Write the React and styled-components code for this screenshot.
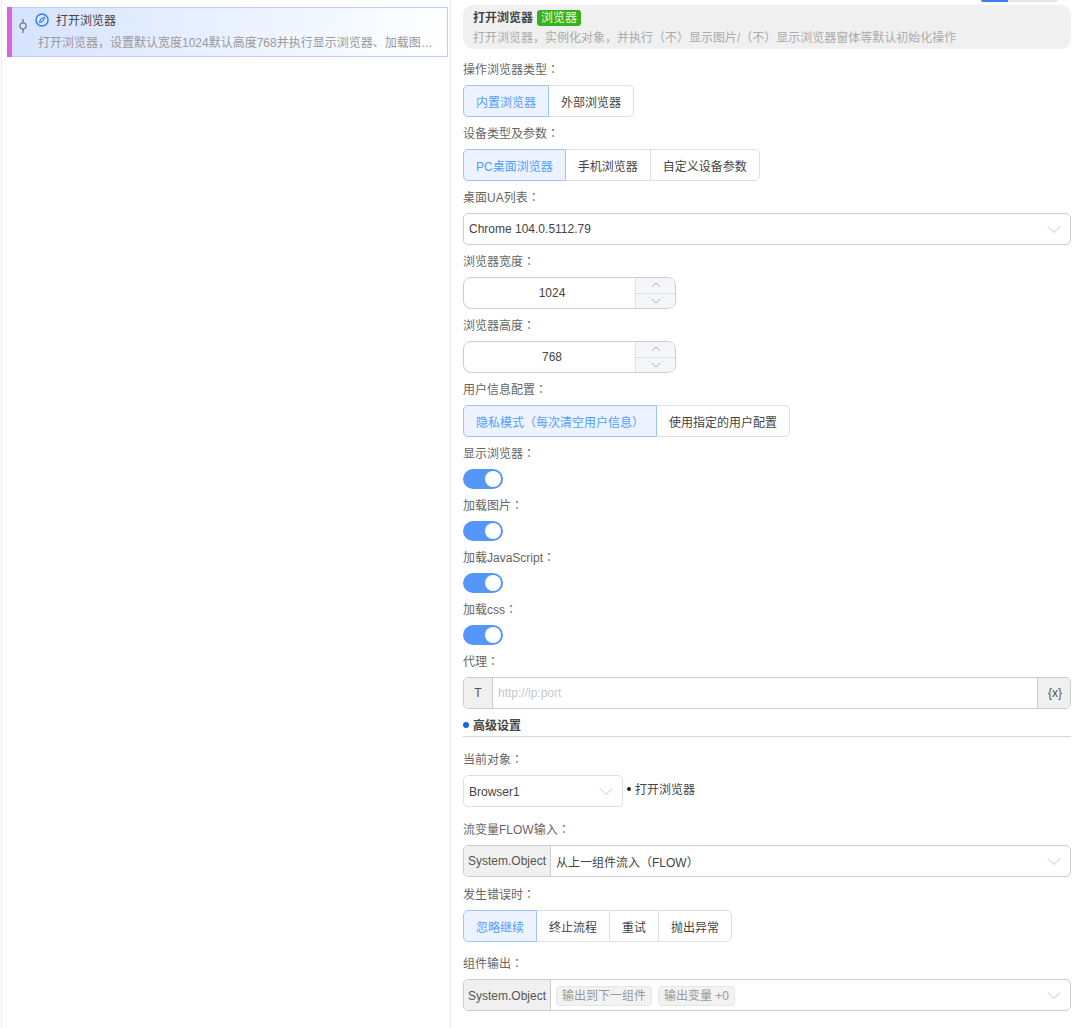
import React from 'react';
import styled, { createGlobalStyle } from 'styled-components';

const GlobalStyle = createGlobalStyle`
  html, body {
    margin: 0;
    padding: 0;
    background: #fff;
  }
  body {
    font-family: "Liberation Sans", "Noto Sans CJK SC", sans-serif;
    font-size: 12px;
    color: #333;
  }
  * {
    box-sizing: border-box;
  }
`;

const Page = styled.div`
  display: flex;
  height: 1028px;
  padding-left: 1px;
  overflow: hidden;
`;

const LeftPanel = styled.aside`
  width: 450px;
  flex: none;
  padding: 7px 2px 0 5px;
  border-left: 1px solid #f0f0f0;
  border-right: 1px solid #ececec;
`;

const FlowItem = styled.div`
  height: 50px;
  display: flex;
  border: 1px solid #b8cdf8;
  background: linear-gradient(100deg, #d5e3ff 0%, #ffffff 100%);
`;

const ItemBar = styled.div`
  width: 5px;
  flex: none;
  margin: -1px 0 -1px -1px;
  background: #d964e0;
`;

const NodeMark = styled.div`
  width: 23px;
  flex: none;
  padding: 10px 0 0 7px;
`;

const ItemBody = styled.div`
  flex: 1;
  min-width: 0;
  padding-top: 1px;
`;

const ItemTitle = styled.div`
  display: flex;
  align-items: center;
  gap: 7px;
  height: 20px;
  color: #444;

  svg {
    margin-top: 1px;
  }
`;

const ItemDesc = styled.div`
  margin: 6px 0 0 3px;
  line-height: 16px;
  color: #999;
  white-space: nowrap;
`;

const RightPanel = styled.main`
  width: 620px;
  flex: none;
  padding-left: 12px;
`;

const TabSliver = styled.div`
  width: 77px;
  height: 2px;
  margin: 0 0 3px 518px;
  border-radius: 0 0 3px 3px;
  background: linear-gradient(90deg, #3d7bf0 0 27px, #e4e7ef 27px);
`;

const InfoCard = styled.div`
  height: 44px;
  margin-bottom: 4px;
  padding: 4px 10px 0;
  border-radius: 10px;
  background: #f0f0f0;
  color: #aaa;
  line-height: 18px;
`;

const InfoTitle = styled.div`
  display: flex;
  align-items: center;
  gap: 4px;
  height: 17px;
  margin-bottom: 3px;
  font-weight: 700;
  color: #444;
`;

const Tag = styled.span`
  height: 16px;
  padding: 0 4px;
  border-radius: 3px;
  background: #38b01f;
  color: #e6ffd8;
  font-weight: 400;
  line-height: 16px;
`;

const LabelRow = styled.div`
  height: 32px;
  margin-top: ${p => p.$top || 0}px;
  line-height: 32px;
  color: #666;
`;

// the reference's full-width colon sits centred in its cell, as the TC face draws it
const LabelColon = styled.span`
  font-family: "Noto Sans CJK TC", sans-serif;
`;

const Label = ({ top, children }) => (
  <LabelRow $top={top}>
    {children}
    <LabelColon>：</LabelColon>
  </LabelRow>
);

const RadioGroup = styled.div`
  display: flex;
  height: 32px;
`;

const RadioButton = styled.div`
  display: flex;
  align-items: center;
  padding: 0 12px;
  margin-left: -1px;
  border: 1px solid ${p => (p.$active ? '#9cc6ff' : '#dcdfe6')};
  background: ${p => (p.$active ? '#ecf3ff' : '#fff')};
  color: ${p => (p.$active ? '#4f9eff' : '#444')};
  z-index: ${p => (p.$active ? 1 : 0)};

  &:first-child {
    margin-left: 0;
    border-radius: 5px 0 0 5px;
  }
  &:last-child {
    border-radius: 0 5px 5px 0;
  }
`;

const Field = styled.div`
  display: flex;
  align-items: center;
  width: ${p => p.$width || '608px'};
  height: 32px;
  border: 1px solid ${p => (p.$light ? '#dcdfe6' : '#ccc')};
  border-radius: 5px;
  overflow: hidden;
  color: #444;
`;

const FieldValue = styled.div`
  display: flex;
  align-items: center;
  gap: 6px;
  flex: 1;
  min-width: 0;
  padding-left: 5px;
  padding-top: ${p => p.$nudge || 0}px;
`;

const Chevron = styled.svg`
  width: 14px;
  height: 14px;
  flex: none;
  margin-right: 9px;
  color: #c0c4cc;
`;

const Addon = styled.div`
  display: flex;
  align-items: center;
  justify-content: center;
  flex: none;
  width: ${p => p.$width}px;
  height: 100%;
  padding-top: ${p => p.$nudge || 0}px;
  padding-left: ${p => (p.$end ? 2 : 0)}px;
  background: #f0f0f0;
  color: #555;
  border-right: ${p => (p.$end ? 'none' : '1px solid #ccc')};
  border-left: ${p => (p.$end ? '1px solid #ccc' : 'none')};
`;

const Placeholder = styled.span`
  color: #c3c7cf;
`;

const Stepper = styled.div`
  display: flex;
  width: 213px;
  height: 32px;
  border: 1px solid #ccc;
  border-radius: 8px;
  overflow: hidden;
  color: #444;
`;

const StepperValue = styled.div`
  flex: 1;
  padding-left: 5px;
  text-align: center;
  line-height: 30px;
`;

const StepperButtons = styled.div`
  display: flex;
  flex-direction: column;
  width: 40px;
  flex: none;
  border-left: 1px solid #dcdfe6;
  background: #f5f6fa;
`;

const StepperButton = styled.div`
  display: flex;
  align-items: center;
  justify-content: center;
  flex: 1;
  color: #aab0bc;

  & + & {
    border-top: 1px solid #dcdfe6;
  }
`;

const Switch = styled.div`
  position: relative;
  width: 40px;
  height: 20px;
  border-radius: 10px;
  background: #5596fb;

  &::after {
    content: '';
    position: absolute;
    top: 2px;
    right: 2px;
    width: 16px;
    height: 16px;
    border-radius: 50%;
    background: #fff;
  }
`;

const SectionTitle = styled.div`
  display: flex;
  align-items: center;
  gap: 4px;
  height: 28px;
  margin-bottom: 6px;
  padding-top: 4px;
  border-bottom: 1px solid #d4d4d4;
  font-weight: 700;
  color: #444;

  &::before {
    content: '';
    width: 6px;
    height: 6px;
    border-radius: 50%;
    background: #1463e6;
  }
`;

const InlineRow = styled.div`
  display: flex;
  align-items: center;
  gap: 4px;
`;

const BulletNote = styled.div`
  display: flex;
  align-items: center;
  gap: 4px;
  margin-top: -5px;
  color: #444;

  &::before {
    content: '';
    width: 4px;
    height: 4px;
    border-radius: 50%;
    background: #222;
  }
`;

const Chip = styled.span`
  height: 20px;
  padding: 0 5px;
  border: 1px solid #e6e6e6;
  border-radius: 4px;
  background: #f2f2f2;
  color: #999;
  line-height: 18px;
`;

const ChevronDown = () => (
  <Chevron viewBox="0 0 14 14" fill="none" stroke="currentColor" strokeWidth="1">
    <path d="M1 4.5 7 10.5 13 4.5" />
  </Chevron>
);

const SmallArrow = ({ up }) => (
  <svg width="10" height="6" viewBox="0 0 10 6" fill="none" stroke="currentColor" strokeWidth="1">
    <path d={up ? 'M1 5 5 1 9 5' : 'M1 1 5 5 9 1'} />
  </svg>
);

const CompassIcon = () => (
  <svg width="14" height="14" viewBox="0 0 15 15" fill="none">
    <circle cx="7.5" cy="7.5" r="6.500" stroke="#2f7cf0" strokeWidth="1.500" />
    <path d="M10.600 4.400 8.800 8.800 4.400 10.600 6.200 6.200Z" stroke="#2f7cf0" strokeWidth="1" fill="#a9c8fa" />
  </svg>
);

const NodeIcon = () => (
  <svg width="8" height="16" viewBox="0 0 8 16" fill="none" stroke="#555" strokeWidth="1">
    <path d="M4 1V4.800M4 11.200V15" />
    <circle cx="4" cy="8" r="3.200" />
  </svg>
);

const NumberField = ({ value }) => (
  <Stepper>
    <StepperValue>{value}</StepperValue>
    <StepperButtons>
      <StepperButton>
        <SmallArrow up />
      </StepperButton>
      <StepperButton>
        <SmallArrow />
      </StepperButton>
    </StepperButtons>
  </Stepper>
);

const Radios = ({ options }) => (
  <RadioGroup>
    {options.map((option, i) => (
      <RadioButton key={option} $active={i === 0}>
        {option}
      </RadioButton>
    ))}
  </RadioGroup>
);

const switches = ['显示浏览器', '加载图片', '加载JavaScript', '加载css'];

const App = () => (
  <Page>
    <GlobalStyle />
    <LeftPanel>
      <FlowItem>
        <ItemBar />
        <NodeMark>
          <NodeIcon />
        </NodeMark>
        <ItemBody>
          <ItemTitle>
            <CompassIcon />
            打开浏览器
          </ItemTitle>
          <ItemDesc>打开浏览器，设置默认宽度1024默认高度768并执行显示浏览器、加载图…</ItemDesc>
        </ItemBody>
      </FlowItem>
    </LeftPanel>
    <RightPanel>
      <TabSliver />
      <InfoCard>
        <InfoTitle>
          打开浏览器
          <Tag>浏览器</Tag>
        </InfoTitle>
        打开浏览器，实例化对象，并执行（不）显示图片/（不）显示浏览器窗体等默认初始化操作
      </InfoCard>

      <Label>操作浏览器类型</Label>
      <Radios options={['内置浏览器', '外部浏览器']} />

      <Label>设备类型及参数</Label>
      <Radios options={['PC桌面浏览器', '手机浏览器', '自定义设备参数']} />

      <Label>桌面UA列表</Label>
      <Field>
        <FieldValue>Chrome 104.0.5112.79</FieldValue>
        <ChevronDown />
      </Field>

      <Label>浏览器宽度</Label>
      <NumberField value="1024" />

      <Label>浏览器高度</Label>
      <NumberField value="768" />

      <Label>用户信息配置</Label>
      <Radios options={['隐私模式（每次清空用户信息）', '使用指定的用户配置']} />

      {switches.map(label => (
        <React.Fragment key={label}>
          <Label>{label}</Label>
          <Switch />
        </React.Fragment>
      ))}

      <Label>代理</Label>
      <Field>
        <Addon $width={29}>T</Addon>
        <FieldValue>
          <Placeholder>http://ip:port</Placeholder>
        </FieldValue>
        <Addon $width={33} $end>
          {'{x}'}
        </Addon>
      </Field>

      <SectionTitle>高级设置</SectionTitle>

      <Label>当前对象</Label>
      <InlineRow>
        <Field $width="160px" $light>
          <FieldValue $nudge={2}>Browser1</FieldValue>
          <ChevronDown />
        </Field>
        <BulletNote>打开浏览器</BulletNote>
      </InlineRow>

      <Label top={6}>流变量FLOW输入</Label>
      <Field>
        <Addon $width={87}>System.Object</Addon>
        <FieldValue>从上一组件流入（FLOW）</FieldValue>
        <ChevronDown />
      </Field>

      <Label top={1}>发生错误时</Label>
      <Radios options={['忽略继续', '终止流程', '重试', '抛出异常']} />

      <Label top={5}>组件输出</Label>
      <Field>
        <Addon $width={87} $nudge={2}>System.Object</Addon>
        <FieldValue $nudge={2}>
          <Chip>输出到下一组件</Chip>
          <Chip>输出变量 +0</Chip>
        </FieldValue>
        <ChevronDown />
      </Field>
    </RightPanel>
  </Page>
);

export default App;
